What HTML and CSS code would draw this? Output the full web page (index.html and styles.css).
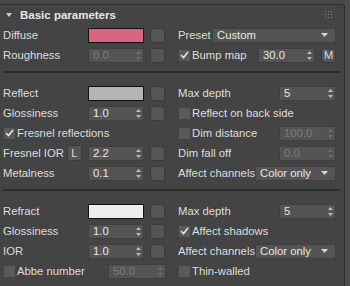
FILE: index.html
```html
<!DOCTYPE html>
<html>
<head>
<meta charset="utf-8">
<link rel="stylesheet" href="styles.css">
</head>
<body>
<div class="wrap">
  <div class="panel">
    <div class="title">
      <svg class="tri" width="6" height="4" viewBox="0 0 6 4"><path d="M0 0H6L3 4Z" fill="#cfcfcf"/></svg>
      <span class="title-text">Basic parameters</span>
      <svg class="grip" width="7" height="7" viewBox="0 0 7 7"><g fill="#8a8a8a"><rect x="0" y="0" width="1" height="1"/><rect x="3" y="0" width="1" height="1"/><rect x="6" y="0" width="1" height="1"/><rect x="0" y="3" width="1" height="1"/><rect x="3" y="3" width="1" height="1"/><rect x="6" y="3" width="1" height="1"/><rect x="0" y="6" width="1" height="1"/><rect x="3" y="6" width="1" height="1"/><rect x="6" y="6" width="1" height="1"/></g></svg>
    </div>

    <div class="section">
      <div class="lbl">Diffuse</div>
      <div class="swatch diffuse"></div>
      <div class="mapcell"><div class="mapbtn"></div></div>
      <div class="right"><span class="rl">Preset</span><div class="drop preset"><span>Custom</span><svg class="darrow" width="7" height="4" viewBox="0 0 7 4"><path d="M0 0H7L3.5 4Z" fill="#d8d8d8"/></svg></div></div>

      <div class="lbl">Roughness</div>
      <div class="spin dis"><span>0.0</span><svg class="arr" width="5" height="9" viewBox="0 0 5 9"><path d="M0 3L2.5 0L5 3Z M0 6L2.5 9L5 6Z" fill="#6e6e6e"/></svg></div>
      <div class="mapcell"><div class="mapbtn"></div></div>
      <div class="right"><span class="cb on"><svg width="9" height="8" viewBox="0 0 9 8"><path d="M1 4L3.5 6.5L8 1" fill="none" stroke="#e8e8e8" stroke-width="1.6"/></svg></span><span class="cl">Bump map</span><div class="spin bump"><span>30.0</span><svg class="arr" width="5" height="9" viewBox="0 0 5 9"><path d="M0 3L2.5 0L5 3Z M0 6L2.5 9L5 6Z" fill="#bdbdbd"/></svg></div><div class="mbtn">M</div></div>
    </div>

    <div class="sep"></div>

    <div class="section">
      <div class="lbl">Reflect</div>
      <div class="swatch reflect"></div>
      <div class="mapcell"><div class="mapbtn"></div></div>
      <div class="right"><span class="rl">Max depth</span><div class="spin depth"><span>5</span><svg class="arr" width="5" height="9" viewBox="0 0 5 9"><path d="M0 3L2.5 0L5 3Z M0 6L2.5 9L5 6Z" fill="#bdbdbd"/></svg></div></div>

      <div class="lbl">Glossiness</div>
      <div class="spin"><span>1.0</span><svg class="arr" width="5" height="9" viewBox="0 0 5 9"><path d="M0 3L2.5 0L5 3Z M0 6L2.5 9L5 6Z" fill="#bdbdbd"/></svg></div>
      <div class="mapcell"><div class="mapbtn"></div></div>
      <div class="right"><span class="cb"></span><span class="cl">Reflect on back side</span></div>

      <div class="lbl span3"><span class="cb on"><svg width="9" height="8" viewBox="0 0 9 8"><path d="M1 4L3.5 6.5L8 1" fill="none" stroke="#e8e8e8" stroke-width="1.6"/></svg></span><span class="cl">Fresnel reflections</span></div>
      <div class="right"><span class="cb"></span><span class="cl">Dim distance</span><div class="spin depth dis"><span>100.0</span><svg class="arr" width="5" height="9" viewBox="0 0 5 9"><path d="M0 3L2.5 0L5 3Z M0 6L2.5 9L5 6Z" fill="#6e6e6e"/></svg></div></div>

      <div class="lbl">Fresnel IOR<div class="lbtn">L</div></div>
      <div class="spin"><span>2.2</span><svg class="arr" width="5" height="9" viewBox="0 0 5 9"><path d="M0 3L2.5 0L5 3Z M0 6L2.5 9L5 6Z" fill="#bdbdbd"/></svg></div>
      <div class="mapcell"><div class="mapbtn"></div></div>
      <div class="right"><span class="rl">Dim fall off</span><div class="spin depth dis"><span>0.0</span><svg class="arr" width="5" height="9" viewBox="0 0 5 9"><path d="M0 3L2.5 0L5 3Z M0 6L2.5 9L5 6Z" fill="#6e6e6e"/></svg></div></div>

      <div class="lbl">Metalness</div>
      <div class="spin"><span>0.1</span><svg class="arr" width="5" height="9" viewBox="0 0 5 9"><path d="M0 3L2.5 0L5 3Z M0 6L2.5 9L5 6Z" fill="#bdbdbd"/></svg></div>
      <div class="mapcell"><div class="mapbtn"></div></div>
      <div class="right"><span class="rl">Affect channels</span><div class="drop chan"><span>Color only</span><svg class="darrow" width="7" height="4" viewBox="0 0 7 4"><path d="M0 0H7L3.5 4Z" fill="#d8d8d8"/></svg></div></div>
    </div>

    <div class="sep sep2"></div>

    <div class="section">
      <div class="lbl">Refract</div>
      <div class="swatch refract"></div>
      <div class="mapcell"><div class="mapbtn"></div></div>
      <div class="right"><span class="rl">Max depth</span><div class="spin depth"><span>5</span><svg class="arr" width="5" height="9" viewBox="0 0 5 9"><path d="M0 3L2.5 0L5 3Z M0 6L2.5 9L5 6Z" fill="#bdbdbd"/></svg></div></div>

      <div class="lbl">Glossiness</div>
      <div class="spin"><span>1.0</span><svg class="arr" width="5" height="9" viewBox="0 0 5 9"><path d="M0 3L2.5 0L5 3Z M0 6L2.5 9L5 6Z" fill="#bdbdbd"/></svg></div>
      <div class="mapcell"><div class="mapbtn"></div></div>
      <div class="right"><span class="cb on"><svg width="9" height="8" viewBox="0 0 9 8"><path d="M1 4L3.5 6.5L8 1" fill="none" stroke="#e8e8e8" stroke-width="1.6"/></svg></span><span class="cl">Affect shadows</span></div>

      <div class="lbl">IOR</div>
      <div class="spin"><span>1.0</span><svg class="arr" width="5" height="9" viewBox="0 0 5 9"><path d="M0 3L2.5 0L5 3Z M0 6L2.5 9L5 6Z" fill="#bdbdbd"/></svg></div>
      <div class="mapcell"><div class="mapbtn"></div></div>
      <div class="right"><span class="rl">Affect channels</span><div class="drop chan"><span>Color only</span><svg class="darrow" width="7" height="4" viewBox="0 0 7 4"><path d="M0 0H7L3.5 4Z" fill="#d8d8d8"/></svg></div></div>

      <div class="lbl span3"><span class="cb"></span><span class="cl">Abbe number</span><div class="spin abbe dis"><span>50.0</span><svg class="arr" width="5" height="9" viewBox="0 0 5 9"><path d="M0 3L2.5 0L5 3Z M0 6L2.5 9L5 6Z" fill="#6e6e6e"/></svg></div></div>
      <div class="right"><span class="cb"></span><span class="cl">Thin-walled</span></div>
    </div>
  </div>
</div>
</body>
</html>
```
FILE: styles.css
```css
html, body {
  margin: 0;
  padding: 0;
}
body {
  width: 350px;
  height: 286px;
  overflow: hidden;
  background: #4e4e4e;
  font-family: "Liberation Sans", Arial, sans-serif;
  font-size: 11.3px;
  color: #dedede;
}
.wrap {
  width: 345px;
  height: 286px;
  background: #484848;
  padding-top: 4px;
  box-sizing: border-box;
}
.panel {
  background: #444444;
  border-top: 1px solid #2e2e2e;
  border-right: 1px solid #2e2e2e;
  border-top-right-radius: 4px;
  height: 282px;
  box-sizing: border-box;
}
.title {
  height: 20px;
  display: flex;
  align-items: center;
  position: relative;
}
.tri {
  margin-left: 6px;
  margin-right: 8px;
}
.title-text {
  font-weight: bold;
  font-size: 11.5px;
  color: #e6e6e6;
}
.grip {
  margin-left: auto;
  margin-right: 12px;
  margin-top: -2px;
}
.section {
  display: grid;
  grid-template-columns: 88px 56px 22px 174px;
  grid-auto-rows: 20px;
  align-items: center;
  padding-top: 0;
}
.lbl {
  padding-left: 3px;
  display: flex;
  align-items: center;
  height: 20px;
  white-space: nowrap;
}
.span3 {
  grid-column: 1 / 4;
}
.right {
  padding-left: 12px;
  padding-right: 4px;
  display: flex;
  align-items: center;
  height: 20px;
  white-space: nowrap;
}
.rl {
  flex: none;
}
.swatch {
  height: 15px;
  box-sizing: border-box;
  border: 1px solid #111;
}
.diffuse { background: #d8647f; }
.reflect { background: #b4b4b4; }
.refract { background: #eeeeee; }
.mapcell {
  display: flex;
  justify-content: flex-end;
  padding-right: 1px;
}
.mapbtn {
  width: 15px;
  height: 15px;
  box-sizing: border-box;
  background: #555555;
  border: 1px solid #3b3b3b;
  border-radius: 3px;
}
.spin, .drop {
  height: 15px;
  box-sizing: border-box;
  background: #545454;
  border: 1px solid #3f3f3f;
  display: flex;
  align-items: center;
  padding-left: 4px;
  color: #e8e8e8;
}
.spin span, .drop span {
  flex: 1;
}
.spin .arr {
  margin-right: 2px;
}
.dis {
  color: #7c7c7c;
}
.drop .darrow {
  margin-right: 7px;
}
.preset {
  margin-left: auto;
  width: 124px;
}
.chan {
  margin-left: auto;
  width: 83px;
}
.depth {
  margin-left: auto;
  width: 57px;
}
.bump {
  margin-left: auto;
  width: 57px;
}
.abbe {
  margin-left: auto;
  width: 58px;
  margin-right: 0;
}
.mbtn {
  margin-left: 6px;
  width: 15px;
  height: 15px;
  box-sizing: border-box;
  background: #555555;
  border: 1px solid #3b3b3b;
  border-radius: 3px;
  display: flex;
  align-items: center;
  justify-content: center;
  font-size: 11px;
  color: #dcdce8;
}
.lbtn {
  margin-left: auto;
  margin-right: 6px;
  width: 15px;
  height: 16px;
  box-sizing: border-box;
  background: #555555;
  border: 1px solid #3b3b3b;
  border-radius: 3px;
  display: flex;
  align-items: center;
  justify-content: center;
  color: #dcdcdc;
}
.cb {
  width: 11px;
  height: 11px;
  background: #5a5a5a;
  display: inline-flex;
  align-items: center;
  justify-content: center;
  margin-left: 1px;
  margin-right: 2px;
  flex: none;
}
.cl {
  flex: none;
}
.sep {
  height: 2px;
  background: #2c2c2c;
  margin: 6px 4px 10px 3px;
}
.sep2 {
  margin-bottom: 10px;
}
```
